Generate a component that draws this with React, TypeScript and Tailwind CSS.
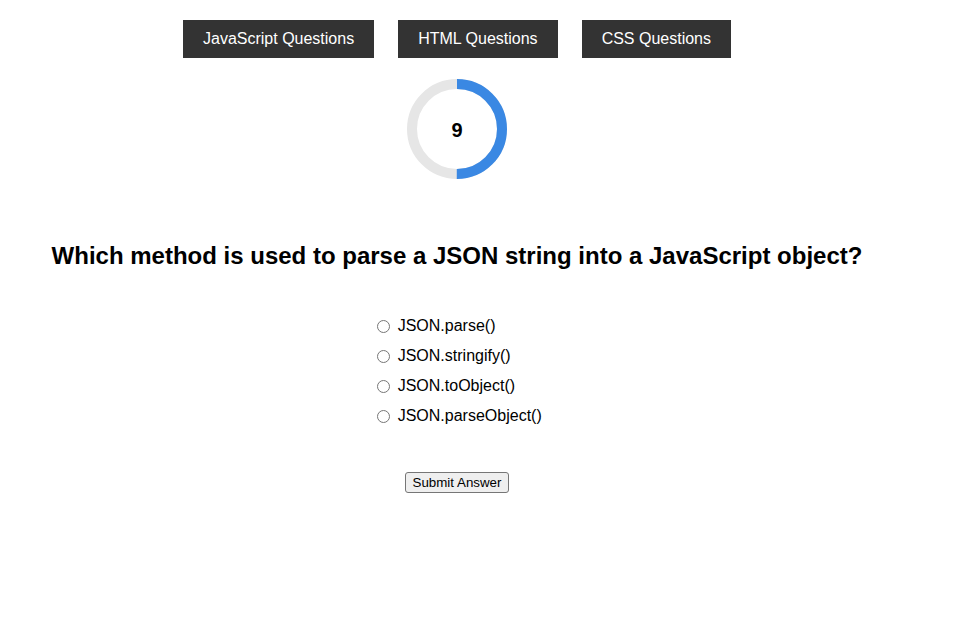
import { useState } from "react";

const topics = ["JavaScript Questions", "HTML Questions", "CSS Questions"];
const options = ["JSON.parse()", "JSON.stringify()", "JSON.toObject()", "JSON.parseObject()"];

function Timer({ value, fraction }: { value: number; fraction: number }) {
  const r = 45;
  const c = 2 * Math.PI * r;
  return (
    <div className="relative h-[100px] w-[100px]">
      <svg width="100" height="100" viewBox="0 0 100 100" className="-rotate-90">
        <circle cx="50" cy="50" r={r} fill="none" stroke="#e6e6e6" strokeWidth="10" />
        <circle
          cx="50"
          cy="50"
          r={r}
          fill="none"
          stroke="#3a88e3"
          strokeWidth="10"
          strokeDasharray={`${c * fraction} ${c}`}
        />
      </svg>
      <div className="absolute inset-0 flex items-center justify-center pt-[2px] text-[20px] font-bold text-black">
        {value}
      </div>
    </div>
  );
}

export default function App() {
  const [picked, setPicked] = useState<string | null>(null);

  return (
    <div className="min-h-[621px] bg-white font-['Liberation_Sans',Arial,sans-serif] text-black">
      <div className="flex w-[914px] flex-col items-center pt-5">
        {/* quiz topic switcher */}
        <div className="flex gap-6">
          {topics.map((t) => (
            <button
              key={t}
              className="bg-[#333333] px-5 py-[10px] text-[16px] leading-[18px] text-white"
            >
              {t}
            </button>
          ))}
        </div>

        <div className="mt-[21px]">
          <Timer value={9} fraction={0.5} />
        </div>

        <h2 className="mt-[63px] text-[24px] font-bold leading-[28px]">
          Which method is used to parse a JSON string into a JavaScript object?
        </h2>

        <div className="mt-[41px] flex flex-col">
          {options.map((o) => (
            <label key={o} className="flex h-[30px] items-center whitespace-pre text-[16px]">
              <input
                type="radio"
                name="answer"
                className="m-0 ml-[5px] mr-[3px] h-[13px] w-[13px]"
                checked={picked === o}
                onChange={() => setPicked(o)}
              />
              {" " + o}
            </label>
          ))}
        </div>

        <button className="mt-[41px] rounded-[3px] border border-[#767676] bg-[#efefef] px-[7px] py-[2px] text-[13.33px] leading-[15px]">
          Submit Answer
        </button>
      </div>
    </div>
  );
}
